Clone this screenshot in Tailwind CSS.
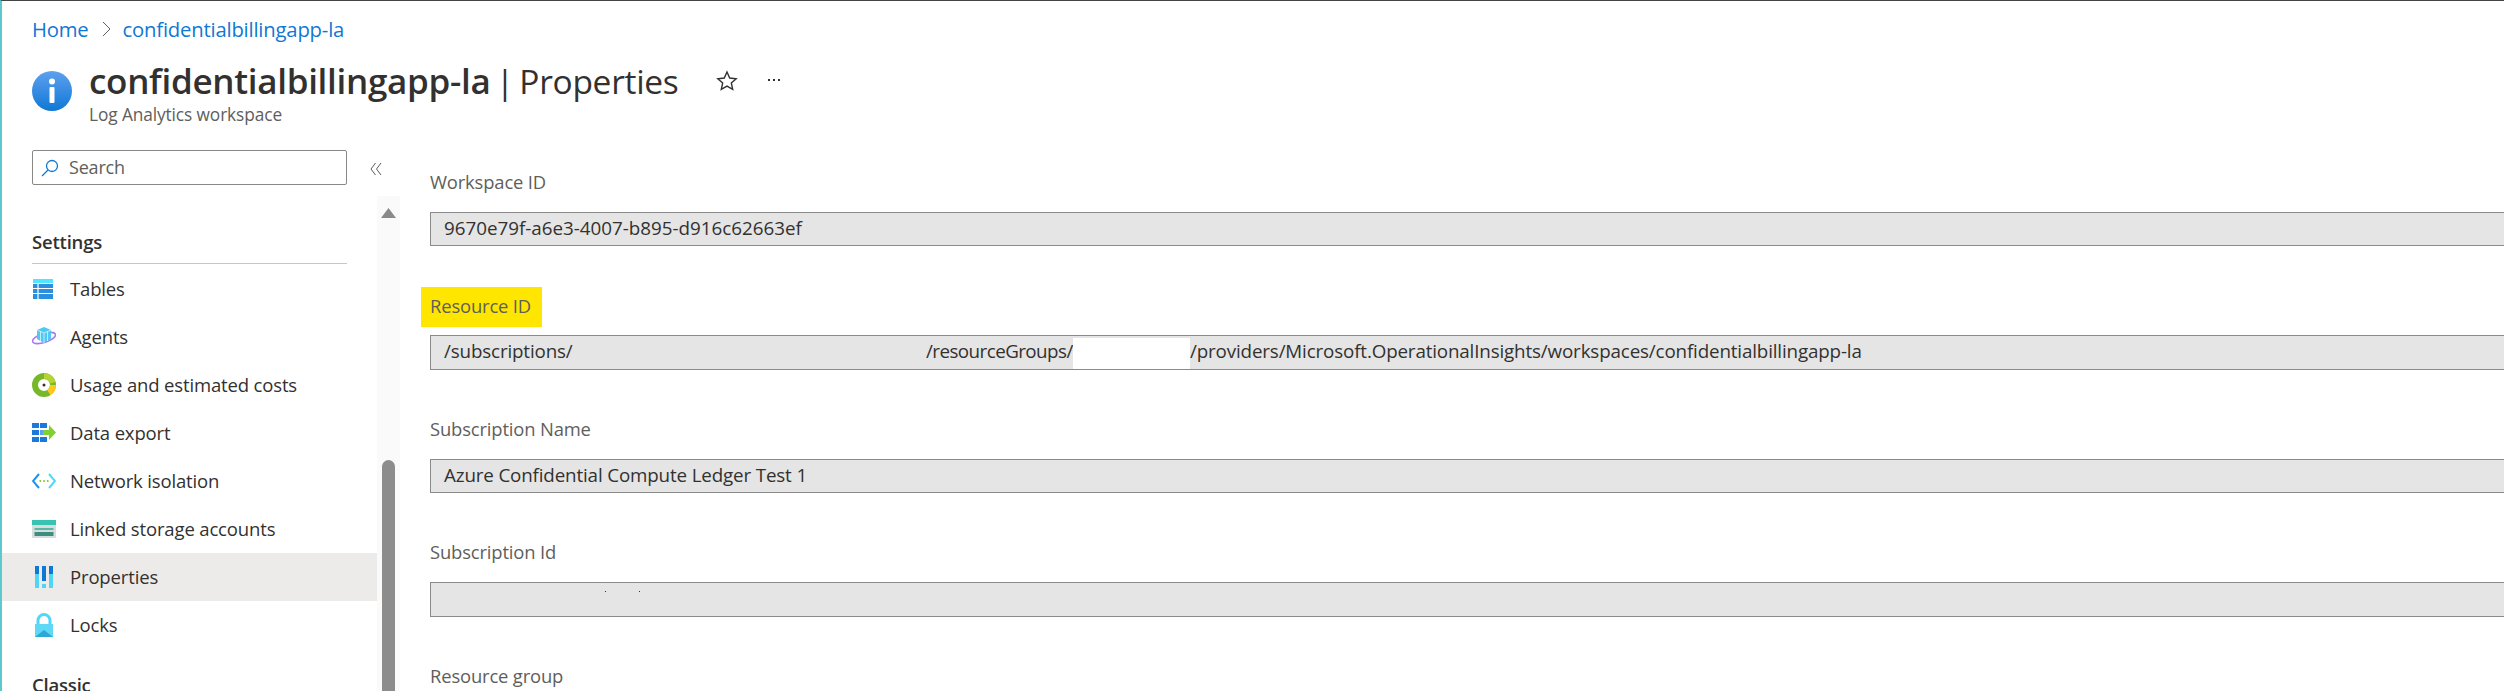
<!DOCTYPE html>
<html lang="en">
<head>
    <meta charset="UTF-8">
    <title>confidentialbillingapp-la | Properties</title>
    <script src="https://cdn.jsdelivr.net/npm/@tailwindcss/browser@4"></script>
</head>
<body class="h-[691px] w-[2504px] overflow-hidden bg-white font-['Open_Sans',sans-serif] text-[#323130]">
<div class="h-[691px] border-t border-t-[#444] border-l-2 border-l-[#5cc9cc] flex flex-col">
    <!-- header -->
    <div class="h-[149px] pl-[30px] shrink-0">
        <div class="h-[56px] flex items-center text-[#0f78d4] text-[20.3px] tracking-[-0.2px]">
            <span>Home</span>
            <svg class="w-[10px] h-[16px] ml-[12px] mr-[12px]" viewBox="0 0 10 16" fill="none" stroke="#605e5c" stroke-width="1"><path d="M2 1l7 7-7 7"/></svg>
            <span>confidentialbillingapp-la</span>
        </div>
        <div class="flex">
            <svg class="w-[40px] h-[40px] mt-[14px] mr-[17px]" viewBox="0 0 40 40">
                <defs><linearGradient id="info" x1="0" y1="0" x2="0" y2="1"><stop offset="0" stop-color="#5ea0ef"/><stop offset="1" stop-color="#0f78d4"/></linearGradient></defs>
                <circle cx="20" cy="20" r="20" fill="url(#info)"/>
                <rect x="17.5" y="16" width="5" height="16" rx="1" fill="#fff"/>
                <circle cx="20" cy="10.5" r="3" fill="#fff"/>
            </svg>
            <div>
                <div class="flex items-center h-[48px]">
                    <h1 class="text-[33.5px] leading-[48px] whitespace-nowrap tracking-[-0.3px] [word-spacing:-3px] w-[589px]"><span class="font-semibold text-[35px]">confidentialbillingapp-la</span> | Properties</h1>
                    <svg class="w-[22px] h-[22px] ml-[38px]" viewBox="0 0 22 22" fill="none" stroke="#323130" stroke-width="1.4"><path d="M11 2l2.7 6 6.5.7-4.9 4.3 1.400 6.400-5.700-3.300-5.700 3.300 1.400-6.400-4.900-4.300 6.500-.7z"/></svg>
                    <span class="ml-[30px] mt-[-3px] flex gap-[3px]"><i class="w-[2px] h-[2px] bg-[#323130]"></i><i class="w-[2px] h-[2px] bg-[#323130]"></i><i class="w-[2px] h-[2px] bg-[#323130]"></i></span>
                </div>
                <div class="text-[17.3px] leading-[20px] text-[#605e5c] tracking-[-0.1px]">Log Analytics workspace</div>
            </div>
        </div>
    </div>
    <div class="flex flex-1 min-h-0">
        <!-- sidebar -->
        <div class="w-[398px] shrink-0 flex flex-col relative">
            <div class="flex items-start pl-[30px]">
                <div class="w-[315px] h-[35px] border border-[#8a8886] rounded-[2px] flex items-center pl-[8px]">
                    <svg class="w-[18px] h-[18px] mr-[10px]" viewBox="0 0 18 18" fill="none" stroke="#0f78d4" stroke-width="1.3"><circle cx="11" cy="7" r="5.500"/><path d="M7 11l-6 6"/></svg>
                    <span class="text-[18px] text-[#605e5c] tracking-[-0.2px]">Search</span>
                </div>
                <svg class="w-[12px] h-[14px] ml-[23px] mt-[12px]" viewBox="0 0 12 14" fill="none" stroke="#605e5c" stroke-width="1"><path d="M5.500 1L1 7l4.500 6M11 1L6.500 7l4.500 6"/></svg>
            </div>
            <div class="flex-1 min-h-0 flex mt-[11px]">
                <div class="w-[375px] overflow-hidden">
                    <div class="ml-[30px] mr-[30px] mt-[35px] h-[33px] border-b border-[#c8c6c4] font-semibold text-[18.5px] leading-[22px] tracking-[-0.2px]">Settings</div>
                    <div class="mt-[1px] text-[18.5px] tracking-[-0.15px]">
                        <div class="h-[48px] pl-[30px] flex items-center">
                            <svg class="w-[22px] h-[22px] mr-[16px]" viewBox="0 0 22 22"><rect x="1" y="1" width="20" height="4" fill="#50e6ff"/><path d="M1 6h20v15H1z" fill="#2b8fe0"/><path d="M1 10.500h20M1 15.500h20M6 6v15" stroke="#fff" stroke-width="1.200"/></svg>
                            <span>Tables</span>
                        </div>
                        <div class="h-[48px] pl-[30px] flex items-center">
                            <svg class="w-[24px] h-[22px] mr-[14px]" viewBox="0 0 24 22"><ellipse cx="12" cy="12" rx="12" ry="4.500" transform="rotate(-18 12 12)" fill="none" stroke="#a67af4" stroke-width="1.600"/><path d="M12 1l7 3v9l-7 4-7-4V4z" fill="#50c8f0"/><path d="M5 4l7 3 7-3M12 7v10M8.500 5.500v9.500M15.500 5.500v9.500" stroke="#d8f6ff" stroke-width=".8" fill="none"/></svg>
                            <span>Agents</span>
                        </div>
                        <div class="h-[48px] pl-[30px] flex items-center">
                            <svg class="w-[24px] h-[24px] mr-[14px]" viewBox="0 0 24 24"><circle cx="12" cy="12" r="9" fill="none" stroke="#76b82a" stroke-width="6"/><path d="M12 3a9 9 0 0 1 8.700 6.700" fill="none" stroke="#b4d334" stroke-width="6"/><path d="M21 12a9 9 0 0 1-4.200 7.600" fill="none" stroke="#ffc91b" stroke-width="6"/><circle cx="12" cy="12" r="1.500" fill="#333"/></svg>
                            <span>Usage and estimated costs</span>
                        </div>
                        <div class="h-[48px] pl-[30px] flex items-center">
                            <svg class="w-[24px] h-[22px] mr-[14px]" viewBox="0 0 24 22"><path d="M0 1h7v5H0zM8 1h7v5H8zM0 8h7v5H0zM0 15h7v5H0zM8 15h7v5H8z" fill="#1b78dc"/><path d="M8 8h7v5H8z" fill="#5ea0ef"/><path d="M11 8h6V3l7 7.500-7 7.500v-5h-6z" fill="#7fd130"/></svg>
                            <span>Data export</span>
                        </div>
                        <div class="h-[48px] pl-[30px] flex items-center">
                            <svg class="w-[24px] h-[16px] mr-[14px]" viewBox="0 0 24 16" fill="none" stroke-width="2"><path d="M7 1L1 8l6 7" stroke="#1b93eb"/><path d="M17 1l6 7-6 7" stroke="#50d5ff"/><path d="M7.500 8h1.500M11.300 8h1.500M15 8h1.500" stroke="#7fd130"/></svg>
                            <span>Network isolation</span>
                        </div>
                        <div class="h-[48px] pl-[30px] flex items-center">
                            <svg class="w-[24px] h-[18px] mr-[14px]" viewBox="0 0 24 18"><rect width="24" height="18" rx="1" fill="#d9dcdc"/><rect width="24" height="5" fill="#37c2b1"/><rect x="2.500" y="8" width="19" height="2" fill="#5ab5a5"/><rect x="2.500" y="12" width="19" height="4" fill="#3b8f80"/></svg>
                            <span>Linked storage accounts</span>
                        </div>
                        <div class="h-[48px] pl-[30px] flex items-center bg-[#edebe9]">
                            <svg class="w-[24px] h-[22px] mr-[14px]" viewBox="0 0 24 22"><rect x="3" y="0" width="4" height="8" fill="#0f78d4"/><rect x="3" y="8" width="4" height="14" fill="#50d5f5"/><rect x="10" y="0" width="4" height="15" fill="#0f78d4"/><rect x="10" y="18" width="4" height="4" fill="#50d5f5"/><rect x="17" y="0" width="4" height="8" fill="#0f78d4"/><rect x="17" y="8" width="4" height="14" fill="#50d5f5"/></svg>
                            <span>Properties</span>
                        </div>
                        <div class="h-[48px] pl-[30px] flex items-center">
                            <svg class="w-[24px] h-[24px] mr-[14px]" viewBox="0 0 24 24"><path d="M6 11V7.500a6 6 0 0 1 12 0V11" fill="none" stroke="#50d5ff" stroke-width="3"/><path d="M3 11h18v13H3z" fill="#5fd8f5"/><path d="M3 24l9-7 9 7z" fill="#2aa9d6"/></svg>
                            <span>Locks</span>
                        </div>
                    </div>
                    <div class="ml-[30px] mt-[25px] font-semibold text-[18.5px] leading-[22px] tracking-[-0.2px]">Classic</div>
                </div>
                <!-- scrollbar -->
                <div class="w-[23px] bg-[#fafafa] relative">
                    <svg class="absolute left-[4px] top-[12px] w-[15px] h-[10px]" viewBox="0 0 15 10"><path d="M7.500 0l7.500 10H0z" fill="#8a8a8a"/></svg>
                    <div class="absolute left-[5px] top-[264px] w-[13px] h-[231px] rounded-t-[7px] bg-[#8c8c8c]"></div>
                </div>
            </div>
        </div>
        <!-- properties -->
        <div class="flex-1 min-w-0 pl-[30px] text-[18.8px] tracking-[-0.15px] overflow-hidden">
            <div class="h-[62px] pt-[20px] leading-[24px] text-[18.4px] text-[#605e5c]">Workspace ID</div>
            <div class="h-[34px] -mr-[10px] bg-[#e5e5e5] border-y border-l border-[#8a8a8a] pl-[13px] leading-[31px] tracking-normal">9670e79f-a6e3-4007-b895-d916c62663ef</div>
            <div class="h-[89px] pt-[41px]">
                <span class="inline-block -ml-[9px] h-[40px] w-[121px] bg-[#ffe600] pl-[9px] leading-[38px] text-[18.4px] text-[#605e5c]">Resource ID</span>
            </div>
            <div class="h-[35px] -mr-[10px] bg-[#e5e5e5] border-y border-l border-[#8a8a8a] pl-[13px] leading-[31px] flex whitespace-nowrap">
                <span class="w-[482px]">/subscriptions/</span>
                <span class="w-[147px] tracking-[-0.55px]">/resourceGroups/</span>
                <span class="w-[117px] h-[31px] mt-[2px] bg-white"></span>
                <span>/providers/Microsoft.OperationalInsights/workspaces/confidentialbillingapp-la</span>
            </div>
            <div class="h-[89px] pt-[47px] leading-[24px] text-[18.4px] text-[#605e5c]">Subscription Name</div>
            <div class="h-[34px] -mr-[10px] bg-[#e5e5e5] border-y border-l border-[#8a8a8a] pl-[13px] leading-[31px]">Azure Confidential Compute Ledger Test 1</div>
            <div class="h-[89px] pt-[47px] leading-[24px] text-[18.4px] text-[#605e5c]">Subscription Id</div>
            <div class="h-[35px] -mr-[10px] bg-[#e5e5e5] border-y border-l border-[#8a8a8a] relative">
                <i class="absolute left-[174px] top-[8px] w-[1px] h-[1px] bg-[#333]"></i>
                <i class="absolute left-[208px] top-[8px] w-[1px] h-[1px] bg-[#333]"></i>
            </div>
            <div class="pt-[47px] leading-[24px] text-[18.4px] text-[#605e5c]">Resource group</div>
        </div>
    </div>
</div>
</body>
</html>
